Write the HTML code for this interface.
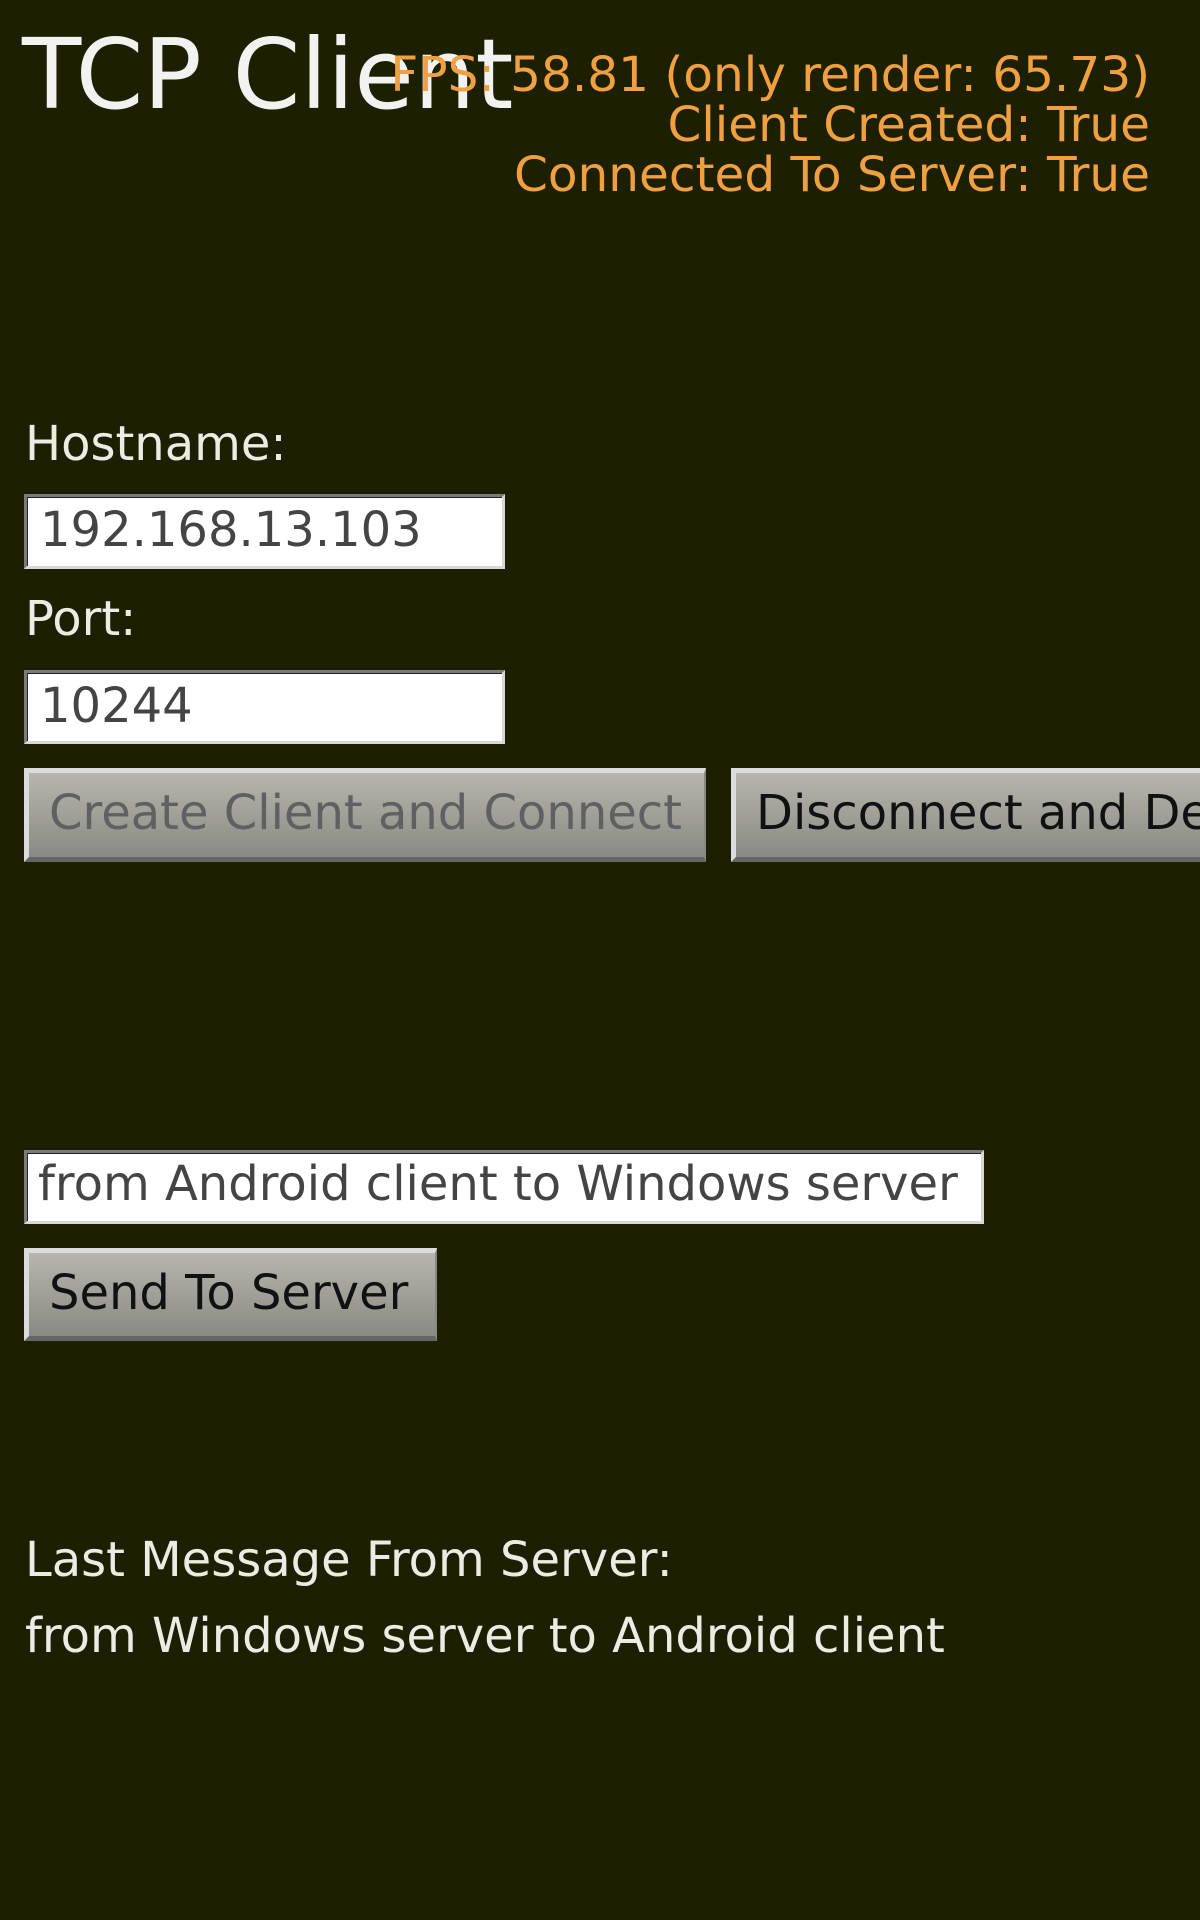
<!DOCTYPE html>
<html><head><meta charset="utf-8"><style>
html,body{margin:0;padding:0;}
body{width:1200px;height:1920px;background:#1d2000;position:relative;overflow:hidden;font-family:"DejaVu Sans","Liberation Sans",sans-serif;}
.t{position:absolute;white-space:nowrap;line-height:1;}
.lbl{color:#ecece4;font-size:48px;left:25px;}
.inp{position:absolute;left:24px;background:#fff;box-sizing:border-box;border-top:3px solid #7a7a7a;border-left:3px solid #7a7a7a;border-bottom:3px solid #d8d8d8;border-right:3px solid #d8d8d8;box-shadow:inset 1px 1px 0 #222;}
.btn{position:absolute;box-sizing:border-box;background:linear-gradient(#b6b6ae,#8a8a84);border-top:5px solid #dcdcdc;border-left:5px solid #dcdcdc;border-bottom:5px solid #666;border-right:2px solid #888;overflow:hidden;}
.in{color:#444;font-size:48px;}
</style></head><body>
<div class="t" style="left:22px;top:26px;font-size:97px;color:#f2f2f0;">TCP Client</div>
<div class="t" style="right:50px;top:50px;font-size:48.5px;color:#f0a040;text-align:right;line-height:50px;">FPS: 58.81 (only render: 65.73)<br>Client Created: True<br>Connected To Server: True</div>

<div class="t lbl" style="top:420px;">Hostname:</div>
<div class="inp" style="top:494px;width:481px;height:75px;"></div>
<div class="t in" style="left:40px;top:506px;">192.168.13.103</div>

<div class="t lbl" style="top:595px;">Port:</div>
<div class="inp" style="top:670px;width:481px;height:74px;"></div>
<div class="t in" style="left:40px;top:682px;">10244</div>

<div class="btn" style="left:24px;top:768px;width:682px;height:94px;"></div>
<div class="t" style="left:49px;top:789px;font-size:48px;color:#606060;">Create Client and Connect</div>
<div class="btn" style="left:731px;top:768px;width:469px;height:94px;border-right:none;"></div>
<div class="t" style="left:756px;top:789px;font-size:48px;color:#111;width:444px;overflow:hidden;">Disconnect and Destroy</div>

<div class="inp" style="top:1150px;width:960px;height:74px;"></div>
<div class="t in" style="left:38px;top:1160px;font-size:48px;">from Android client to Windows server</div>

<div class="btn" style="left:24px;top:1248px;width:413px;height:93px;"></div>
<div class="t" style="left:49px;top:1269px;font-size:48px;color:#111;">Send To Server</div>

<div class="t lbl" style="top:1536px;">Last Message From Server:</div>
<div class="t lbl" style="top:1612px;">from Windows server to Android client</div>
</body></html>
